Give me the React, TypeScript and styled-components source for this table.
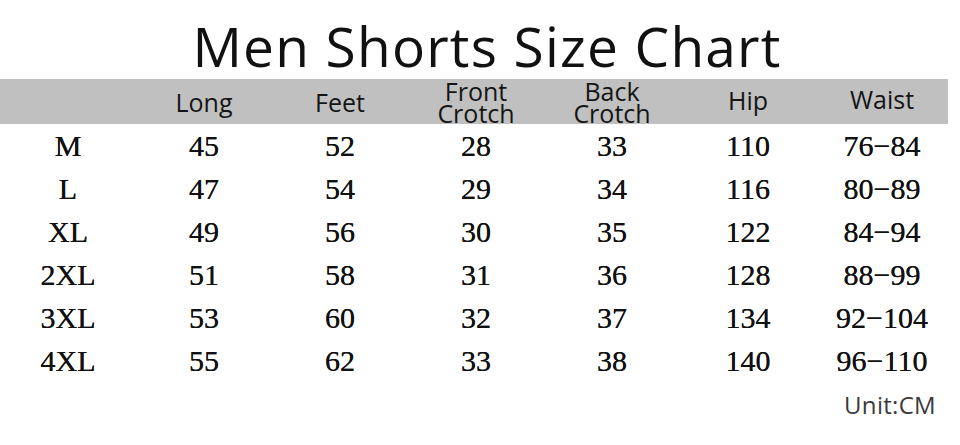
import * as React from 'react'
import styled, { createGlobalStyle } from 'styled-components'

const GlobalStyle = createGlobalStyle`
  html, body {
    margin: 0;
    padding: 0;
    background: #FFFFFF;
  }
`

const Page = styled.div`
  width: 960px;
  height: 445px;
  overflow: hidden;
  background: #FFFFFF;
`

const Title = styled.h1`
  margin: 0;
  height: 79px;
  padding-left: 14px;
  font-family: 'Open Sans', 'Noto Sans', sans-serif;
  font-weight: 400;
  font-size: 55px;
  line-height: 92px;
  text-align: center;
  color: #111111;
  letter-spacing: 1.2px;
`

const Table = styled.div`
  display: grid;
  grid-template-columns: repeat(6, 136px) 132px;
`

const HeadCell = styled('div')<{ lift?: number }>`
  height: 45px;
  background: #C0C0C0;
  display: flex;
  align-items: center;
  justify-content: center;
  text-align: center;
  font-family: 'Open Sans', 'Noto Sans', sans-serif;
  font-size: 25px;
  line-height: 22px;
  color: #151515;
  padding-bottom: ${p => p.lift ?? 0}px;
  box-sizing: border-box;
`

const Cell = styled.div`
  height: 43px;
  display: flex;
  align-items: center;
  justify-content: center;
  font-family: 'Liberation Serif', 'DejaVu Serif', serif;
  font-size: 30px;
  color: #111111;
  text-shadow: 0 0 0.4px #111111;
`

const Footer = styled.div`
  display: flex;
  justify-content: flex-end;
  padding: 6px 24px 0 0;
  font-family: 'Open Sans', 'Noto Sans', sans-serif;
  font-size: 24px;
  letter-spacing: 0.3px;
  color: #3A3A3A;
`

const headers: { label: React.ReactNode; lift?: number }[] = [
  { label: '' },
  { label: 'Long' },
  { label: 'Feet' },
  { label: <>Front<br />Crotch</> },
  { label: <>Back<br />Crotch</> },
  { label: 'Hip', lift: 4 },
  { label: 'Waist', lift: 6 },
]

const rows = [
  ['M', '45', '52', '28', '33', '110', '76−84'],
  ['L', '47', '54', '29', '34', '116', '80−89'],
  ['XL', '49', '56', '30', '35', '122', '84−94'],
  ['2XL', '51', '58', '31', '36', '128', '88−99'],
  ['3XL', '53', '60', '32', '37', '134', '92−104'],
  ['4XL', '55', '62', '33', '38', '140', '96−110'],
]

const App: React.FC = () => {
  return (
    <Page>
      <GlobalStyle />
      <Title>Men Shorts Size Chart</Title>
      <Table>
        {headers.map((h, i) => (
          <HeadCell key={i} lift={h.lift}>{h.label}</HeadCell>
        ))}
        {rows.map(r =>
          r.map((v, i) => <Cell key={r[0] + i}>{v}</Cell>)
        )}
      </Table>
      <Footer>Unit:CM</Footer>
    </Page>
  )
}

export default App
